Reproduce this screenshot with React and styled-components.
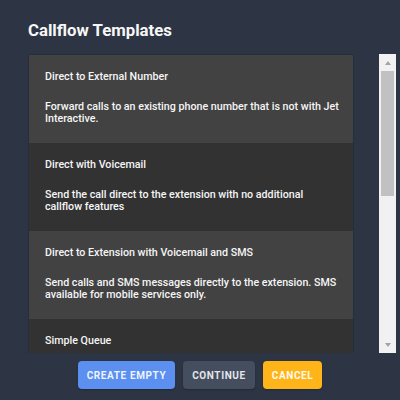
import React from "react";
import styled, { createGlobalStyle } from "styled-components";

const templates = [
  {
    id: 1,
    title: "Direct to External Number",
    description:
      "Forward calls to an existing phone number that is not with Jet Interactive.",
  },
  {
    id: 2,
    title: "Direct with Voicemail",
    description:
      "Send the call direct to the extension with no additional callflow features",
  },
  {
    id: 3,
    title: "Direct to Extension with Voicemail and SMS",
    description:
      "Send calls and SMS messages directly to the extension. SMS available for mobile services only.",
  },
  {
    id: 4,
    title: "Simple Queue",
    description:
      "Calls wait in a queue and are answered by the next available agent in order.",
  },
];

const scroll = { thumb: 125, offset: 0 };

const GlobalStyle = createGlobalStyle`
  html, body {
    margin: 0;
    padding: 0;
    background: #2d3545;
    font-family: Roboto, "Liberation Sans", sans-serif;
  }
`;

const Dialog = styled.div`
  width: 400px;
  height: 400px;
  box-sizing: border-box;
  padding: 18px 4px 0 28px;
  background: #2d3545;
  display: flex;
  flex-direction: column;
`;

const Title = styled.h2`
  margin: 0;
  font-size: 16.75px;
  line-height: 24px;
  font-weight: 700;
  color: #f7f7f7;
`;

const Body = styled.div`
  margin-top: 12px;
  height: 299px;
  display: flex;
  justify-content: space-between;
`;

const List = styled.ul`
  list-style: none;
  margin: 0;
  padding: 0;
  width: 326px;
  box-sizing: border-box;
  overflow: hidden;
  border: 1px solid #272e3b;
  border-bottom: none;
`;

const Item = styled.li`
  padding: 15px 14px 18px 16px;
  background: ${(p) => (p.$alt ? "#323232" : "#424242")};
  color: #f5f5f5;
  font-size: 10.7px;
  font-weight: 500;
`;

const ItemTitle = styled.div`
  line-height: 13px;
`;

const ItemText = styled.p`
  margin: 18px 0 0;
  line-height: 12px;
`;

const Scrollbar = styled.div`
  width: 17px;
  background: #f1f1f1;
  display: flex;
  flex-direction: column;
`;

const Arrow = styled.div`
  height: 17px;
  display: flex;
  align-items: center;
  justify-content: center;

  &::after {
    content: "";
    border-left: 3.5px solid transparent;
    border-right: 3.5px solid transparent;
    ${(p) =>
      p.$down
        ? "border-top: 4px solid #a3a3a3;"
        : "border-bottom: 4px solid #a3a3a3;"}
  }
`;

const Track = styled.div`
  flex: 1;
  padding: 0 2px;
`;

const Thumb = styled.div`
  background: #c1c1c1;
`;

const Actions = styled.div`
  display: flex;
  justify-content: center;
  gap: 8px;
  margin: 8px 24px 0 0;
`;

const tones = {
  primary: { bg: "#5b8ff0", fg: "#eef3fd" },
  neutral: { bg: "#454e5e", fg: "#e4e6ea" },
  warning: { bg: "#ffb519", fg: "#fffaf0" },
};

const Button = styled.button`
  height: 28px;
  padding: 0 9px;
  border: none;
  border-radius: 4px;
  background: ${(p) => tones[p.$tone].bg};
  color: ${(p) => tones[p.$tone].fg};
  font-family: Roboto, "Liberation Sans", sans-serif;
  font-size: 10px;
  font-weight: 700;
  letter-spacing: 0.6px;
  text-transform: uppercase;
  box-shadow: 0 1px 2px rgba(0, 0, 0, 0.25);
  cursor: pointer;
`;

const App = () => {
  return (
    <>
      <GlobalStyle />
      <Dialog>
        <Title>Callflow Templates</Title>
        <Body>
          <List>
            {templates.map((item, index) => (
              <Item key={item.id} $alt={index % 2 === 1}>
                <ItemTitle>{item.title}</ItemTitle>
                <ItemText>{item.description}</ItemText>
              </Item>
            ))}
          </List>
          <Scrollbar>
            <Arrow />
            <Track>
              <Thumb
                style={{ height: scroll.thumb, marginTop: scroll.offset }}
              />
            </Track>
            <Arrow $down />
          </Scrollbar>
        </Body>
        <Actions>
          <Button $tone="primary">Create Empty</Button>
          <Button $tone="neutral">Continue</Button>
          <Button $tone="warning">Cancel</Button>
        </Actions>
      </Dialog>
    </>
  );
};

export default App;
